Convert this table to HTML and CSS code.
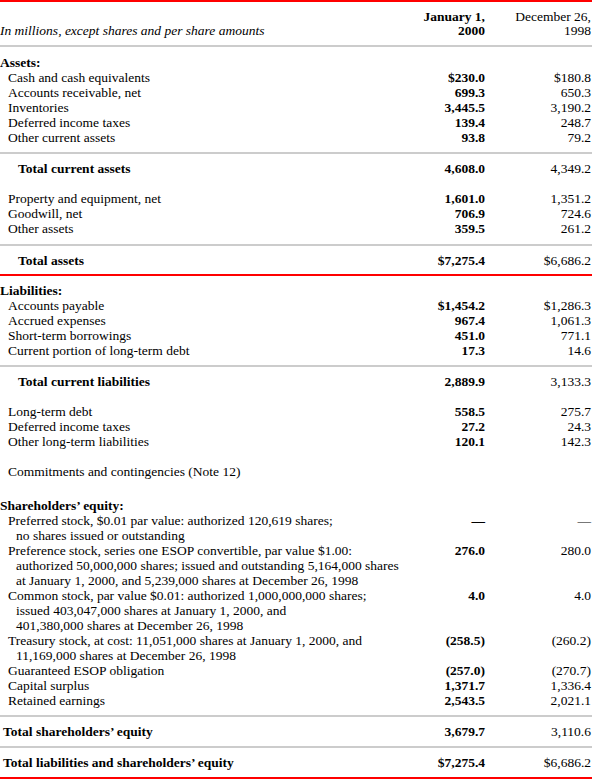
FILE: index.html
```html
<!DOCTYPE html>
<html>
<head>
<meta charset="utf-8">
<link rel="stylesheet" href="styles.css">
</head>
<body>
<div class="sheet">
  <div class="row hdr">
    <div class="lbl cap">In millions, except shares and per share amounts</div>
    <div class="cur">January 1,<br>2000</div>
    <div class="prev">December 26,<br>1998</div>
  </div>

  <div class="grp g-assets">
    <div class="row"><div class="lbl sec">Assets:</div><div class="cur"></div><div class="prev"></div></div>
    <div class="row"><div class="lbl item">Cash and cash equivalents</div><div class="cur">$230.0</div><div class="prev">$180.8</div></div>
    <div class="row"><div class="lbl item">Accounts receivable, net</div><div class="cur">699.3</div><div class="prev">650.3</div></div>
    <div class="row"><div class="lbl item">Inventories</div><div class="cur">3,445.5</div><div class="prev">3,190.2</div></div>
    <div class="row"><div class="lbl item">Deferred income taxes</div><div class="cur">139.4</div><div class="prev">248.7</div></div>
    <div class="row"><div class="lbl item">Other current assets</div><div class="cur">93.8</div><div class="prev">79.2</div></div>
  </div>
  <div class="row tot"><div class="lbl tl">Total current assets</div><div class="cur">4,608.0</div><div class="prev">4,349.2</div></div>

  <div class="grp g-noncur">
    <div class="row"><div class="lbl item">Property and equipment, net</div><div class="cur">1,601.0</div><div class="prev">1,351.2</div></div>
    <div class="row"><div class="lbl item">Goodwill, net</div><div class="cur">706.9</div><div class="prev">724.6</div></div>
    <div class="row"><div class="lbl item">Other assets</div><div class="cur">359.5</div><div class="prev">261.2</div></div>
  </div>
  <div class="row tot end short"><div class="lbl tl">Total assets</div><div class="cur">$7,275.4</div><div class="prev">$6,686.2</div></div>

  <div class="grp g-liab">
    <div class="row"><div class="lbl sec">Liabilities:</div><div class="cur"></div><div class="prev"></div></div>
    <div class="row"><div class="lbl item">Accounts payable</div><div class="cur">$1,454.2</div><div class="prev">$1,286.3</div></div>
    <div class="row"><div class="lbl item">Accrued expenses</div><div class="cur">967.4</div><div class="prev">1,061.3</div></div>
    <div class="row"><div class="lbl item">Short-term borrowings</div><div class="cur">451.0</div><div class="prev">771.1</div></div>
    <div class="row"><div class="lbl item">Current portion of long-term debt</div><div class="cur">17.3</div><div class="prev">14.6</div></div>
  </div>
  <div class="row tot"><div class="lbl tl">Total current liabilities</div><div class="cur">2,889.9</div><div class="prev">3,133.3</div></div>

  <div class="grp g-lt">
    <div class="row"><div class="lbl item">Long-term debt</div><div class="cur">558.5</div><div class="prev">275.7</div></div>
    <div class="row"><div class="lbl item">Deferred income taxes</div><div class="cur">27.2</div><div class="prev">24.3</div></div>
    <div class="row"><div class="lbl item">Other long-term liabilities</div><div class="cur">120.1</div><div class="prev">142.3</div></div>
    <div class="row note"><div class="lbl item">Commitments and contingencies (Note 12)</div><div class="cur"></div><div class="prev"></div></div>
  </div>

  <div class="grp g-eq">
    <div class="row"><div class="lbl sec">Shareholders’ equity:</div><div class="cur"></div><div class="prev"></div></div>
    <div class="row"><div class="lbl item hang">Preferred stock, $0.01 par value: authorized 120,619 shares;<br>no shares issued or outstanding</div><div class="cur">—</div><div class="prev">—</div></div>
    <div class="row"><div class="lbl item hang">Preference stock, series one ESOP convertible, par value $1.00:<br>authorized 50,000,000 shares; issued and outstanding 5,164,000 shares<br>at January 1, 2000, and 5,239,000 shares at December 26, 1998</div><div class="cur">276.0</div><div class="prev">280.0</div></div>
    <div class="row"><div class="lbl item hang">Common stock, par value $0.01: authorized 1,000,000,000 shares;<br>issued 403,047,000 shares at January 1, 2000, and<br>401,380,000 shares at December 26, 1998</div><div class="cur">4.0</div><div class="prev">4.0</div></div>
    <div class="row"><div class="lbl item hang">Treasury stock, at cost: 11,051,000 shares at January 1, 2000, and<br>11,169,000 shares at December 26, 1998</div><div class="cur">(258.5)</div><div class="prev">(260.2)</div></div>
    <div class="row"><div class="lbl item">Guaranteed ESOP obligation</div><div class="cur">(257.0)</div><div class="prev">(270.7)</div></div>
    <div class="row"><div class="lbl item">Capital surplus</div><div class="cur">1,371.7</div><div class="prev">1,336.4</div></div>
    <div class="row"><div class="lbl item">Retained earnings</div><div class="cur">2,543.5</div><div class="prev">2,021.1</div></div>
  </div>
  <div class="row tot"><div class="lbl te">Total shareholders’ equity</div><div class="cur">3,679.7</div><div class="prev">3,110.6</div></div>
  <div class="row tot end"><div class="lbl te">Total liabilities and shareholders’ equity</div><div class="cur">$7,275.4</div><div class="prev">$6,686.2</div></div>
</div>
</body>
</html>
```

FILE: styles.css
```css
html, body {
  margin: 0;
  padding: 0;
  background: #fff;
}

body {
  font-family: "Liberation Serif", "Times New Roman", serif;
  font-size: 13.5px;
  line-height: 15px;
  color: #000;
  width: 592px;
}

.sheet {
  border-top: 2px solid #ff0000;
}

.row {
  display: grid;
  grid-template-columns: minmax(0, 1fr) 95px 106px;
  padding-right: 1px;
}

.lbl {
  white-space: nowrap;
}

.cur {
  text-align: right;
  font-weight: bold;
  white-space: nowrap;
}

.prev {
  text-align: right;
  white-space: nowrap;
}

.hdr {
  line-height: 14px;
  padding: 8px 1px 7px 0;
  border-bottom: 2px solid #cccccc;
}

.hdr .cap {
  font-style: italic;
  align-self: end;
}

.sec {
  font-weight: bold;
}

.item {
  padding-left: 8px;
}

.hang {
  padding-left: 16px;
  text-indent: -8px;
}

.tl {
  padding-left: 18px;
}

.te {
  padding-left: 3px;
}

.tot {
  border-top: 2px solid #cccccc;
  padding-top: 7px;
  padding-bottom: 7px;
  font-weight: bold;
}

.tot .prev {
  font-weight: normal;
}

.tot.end {
  border-bottom: 2px solid #ff0000;
}

.tot.short {
  padding-bottom: 6px;
}

.g-assets {
  padding: 8px 0 7px;
}

.g-noncur {
  padding: 8px 0 8px;
}

.g-liab {
  padding: 7px 0 7px;
}

.g-lt {
  padding: 8px 0 0;
}

.note {
  margin-top: 15px;
}

.g-eq {
  padding: 19px 0 7px;
}
```
